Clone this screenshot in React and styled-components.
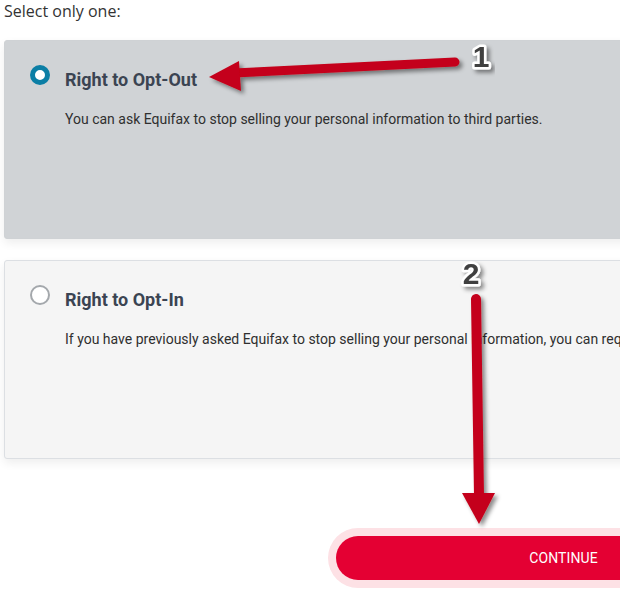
import React, { useState } from "react";
import styled, { createGlobalStyle } from "styled-components";

const Global = createGlobalStyle`
  html, body { margin: 0; padding: 0; background: #ffffff; overflow: hidden; }
  * { box-sizing: border-box; }
`;

const Page = styled.div`
  position: relative;
  width: 799px;
  padding-left: 4px;
  height: 599px;
`;

const Prompt = styled.p`
  margin: 0;
  font-family: "Open Sans", "Liberation Sans", sans-serif;
  font-size: 16px;
  line-height: 22px;
  color: #333333;
`;

const CardList = styled.div`
  margin-top: 18px;
  display: flex;
  flex-direction: column;
  gap: 21px;
`;

const Card = styled.div`
  height: 199px;
  border: 1px solid ${(p) => (p.$selected ? "#cfd2d5" : "#dcdfe3")};
  border-radius: 3px;
  background: ${(p) => (p.$selected ? "#d0d3d6" : "#f5f5f5")};
  box-shadow: 0 4px 10px rgba(0, 0, 0, 0.07);
  padding: 24px 24px 0 25px;
  cursor: pointer;
`;

const Header = styled.div`
  display: flex;
  align-items: flex-start;
  gap: 15px;
`;

const Radio = styled.span`
  flex: none;
  width: 20px;
  height: 20px;
  border-radius: 50%;
  background: #ffffff;
  border: ${(p) => (p.$checked ? "5px solid #0b7ea5" : "2px solid #a4a8ac")};
`;

const Title = styled.h3`
  margin: 4px 0 0;
  font-family: Roboto, "Liberation Sans", sans-serif;
  font-weight: 700;
  font-size: 18px;
  line-height: 22px;
  color: #3b4452;
`;

const Description = styled.p`
  margin: 18px 0 0 35px;
  font-family: Roboto, "Liberation Sans", sans-serif;
  font-size: 14px;
  line-height: 20px;
  color: #2f2f2f;
  white-space: nowrap;
`;

const Footer = styled.div`
  margin-top: 77px;
  display: flex;
  justify-content: flex-end;
  padding-right: 8px;
`;

const Button = styled.button`
  width: 455px;
  height: 44px;
  border: none;
  border-radius: 22px;
  background: #e40033;
  box-shadow: 0 0 0 8px #fde1e5;
  color: #ffffff;
  font-family: Roboto, "Liberation Sans", sans-serif;
  font-size: 14px;
  letter-spacing: 0.1px;
  text-transform: uppercase;
  cursor: pointer;
`;

const Overlay = styled.svg`
  position: absolute;
  left: 0;
  top: 0;
  width: 620px;
  height: 599px;
  pointer-events: none;
`;

const Num = styled.text`
  font-family: "Liberation Sans", Arial, sans-serif;
  font-weight: 700;
  font-size: 30px;
  fill: #404040;
  stroke: #ffffff;
  stroke-width: 5px;
  stroke-linejoin: round;
  paint-order: stroke;
`;

const options = [
  {
    id: "out",
    title: "Right to Opt-Out",
    text: "You can ask Equifax to stop selling your personal information to third parties.",
  },
  {
    id: "in",
    title: "Right to Opt-In",
    text: "If you have previously asked Equifax to stop selling your personal information, you can request that Equifax resume selling it.",
  },
];

export default function App() {
  const [choice, setChoice] = useState("out");
  return (
    <>
      <Global />
      <Page>
        <Prompt>Select only one:</Prompt>
        <CardList>
          {options.map((o) => (
            <Card key={o.id} $selected={choice === o.id} onClick={() => setChoice(o.id)}>
              <Header>
                <Radio $checked={choice === o.id} />
                <Title>{o.title}</Title>
              </Header>
              <Description>{o.text}</Description>
            </Card>
          ))}
        </CardList>
        <Footer>
          <Button>Continue</Button>
        </Footer>
        <Overlay viewBox="0 0 620 599">
          <defs>
            <filter id="sh" x="-20%" y="-20%" width="140%" height="140%">
              <feDropShadow dx="3" dy="3" stdDeviation="2" floodColor="#000" floodOpacity="0.45" />
            </filter>
          </defs>
          <g filter="url(#sh)" fill="#c4001a">
            <line x1="234" y1="73" x2="455" y2="62" stroke="#c4001a" strokeWidth="9" strokeLinecap="round" />
            <polygon points="209,77 239,61 241,91" />
            <line x1="476" y1="299" x2="479" y2="496" stroke="#c4001a" strokeWidth="10" strokeLinecap="round" />
            <polygon points="462,493 495,493 479,524" />
          </g>
          <g filter="url(#sh)">
            <Num x="481" y="67" textAnchor="middle">1</Num>
            <Num x="471" y="284" textAnchor="middle">2</Num>
          </g>
        </Overlay>
      </Page>
    </>
  );
}
